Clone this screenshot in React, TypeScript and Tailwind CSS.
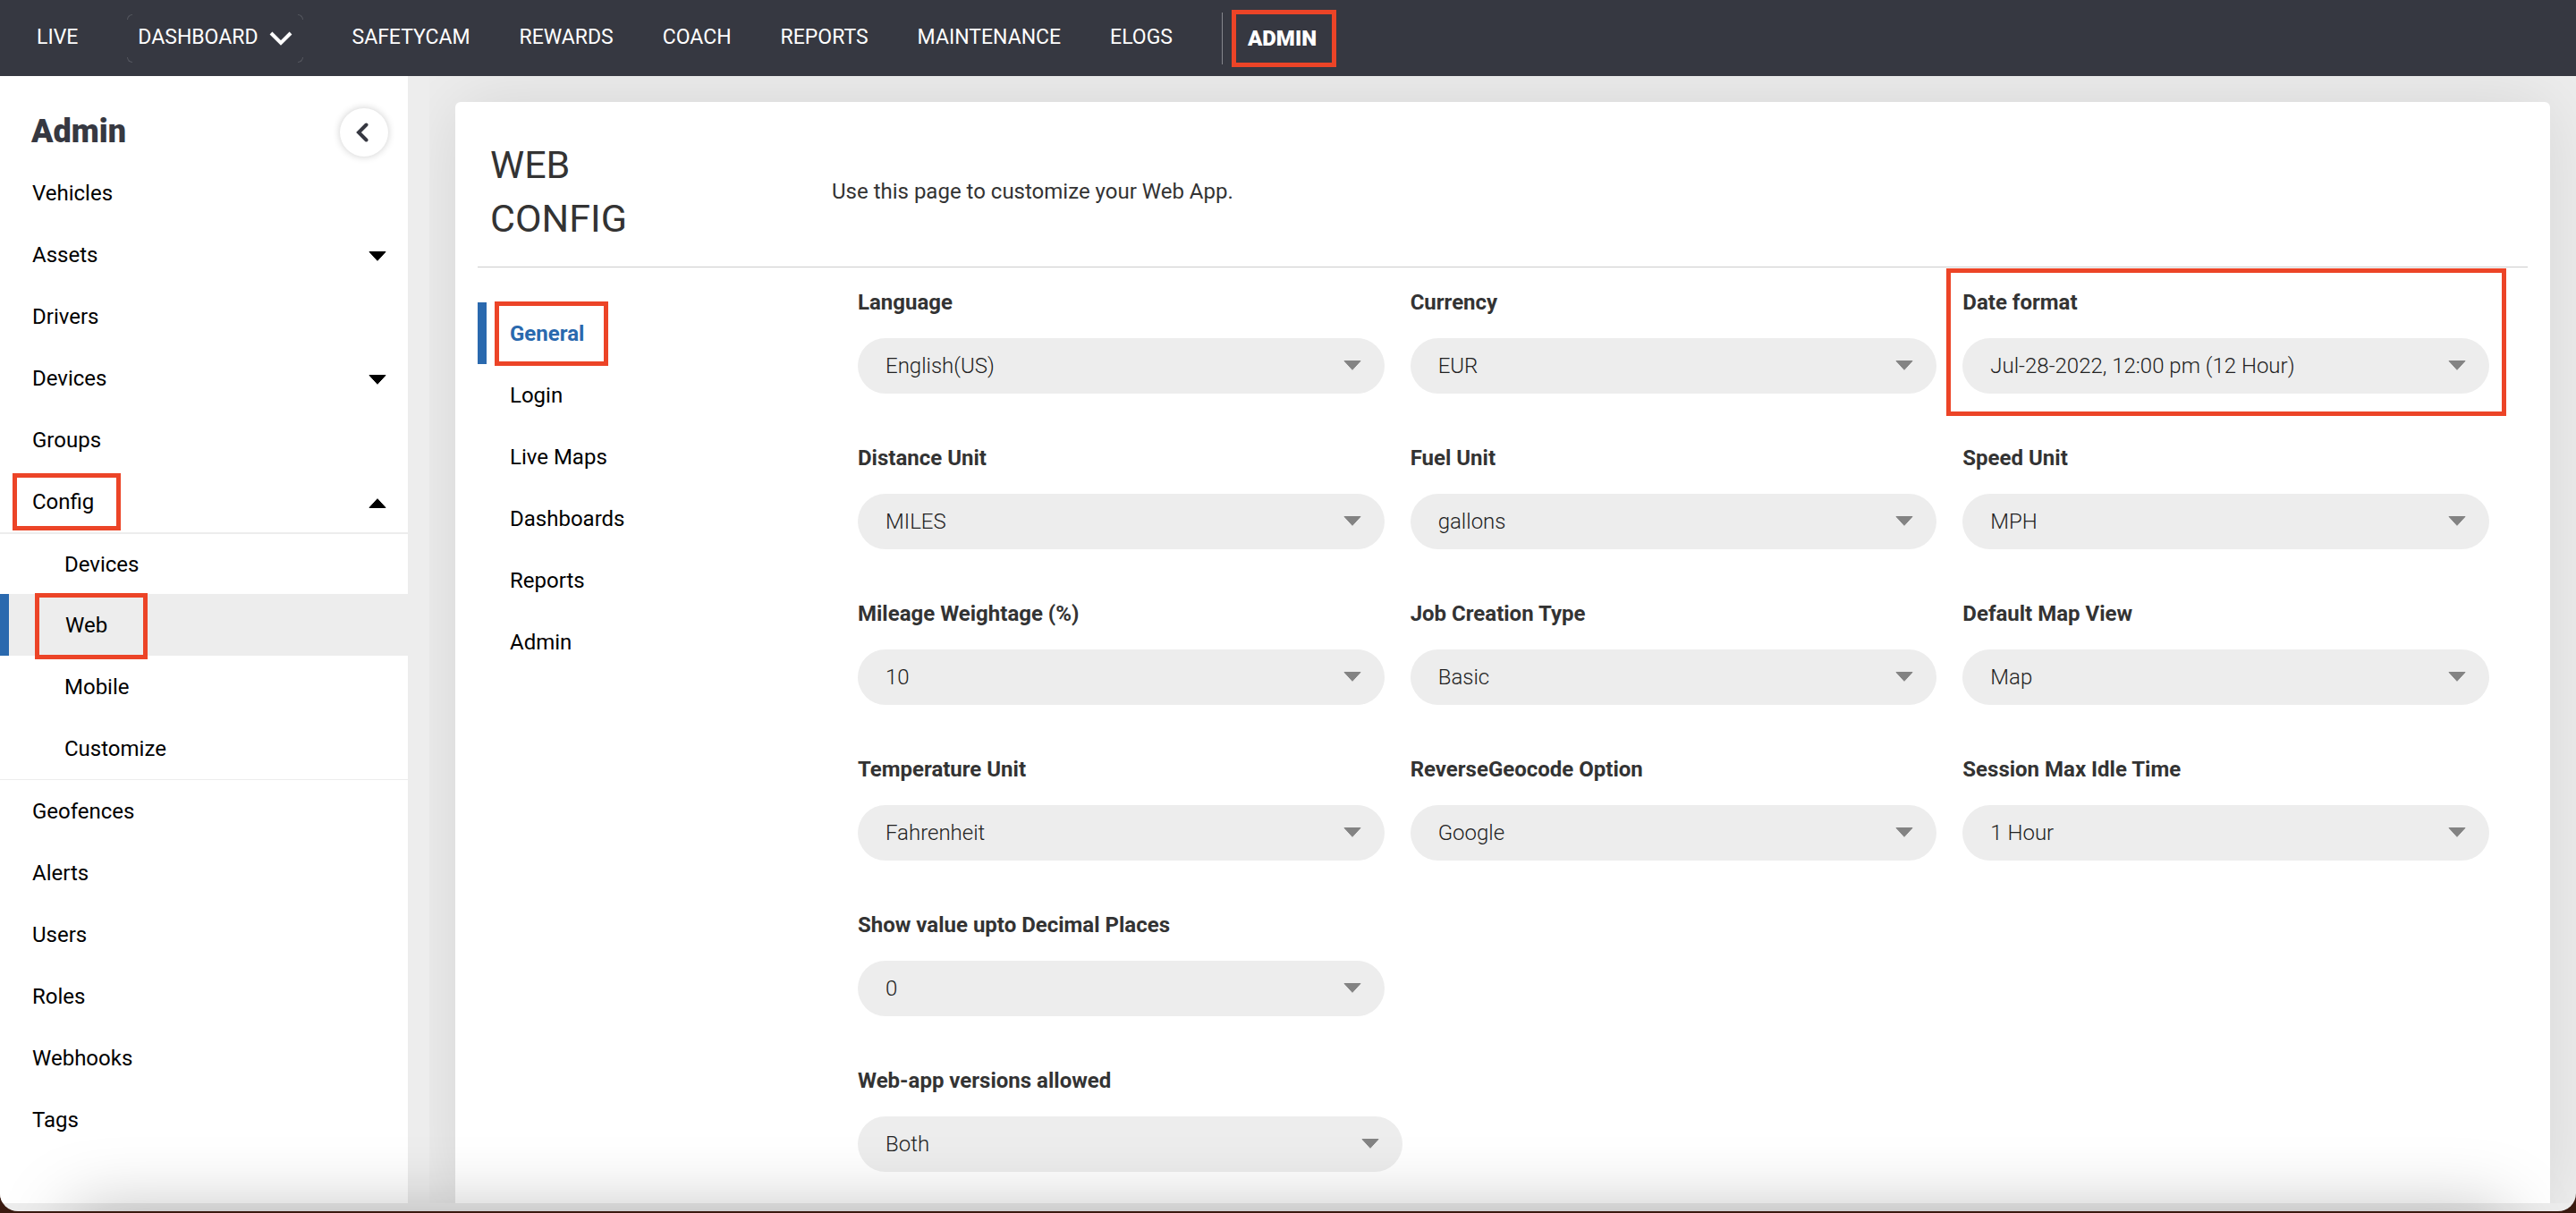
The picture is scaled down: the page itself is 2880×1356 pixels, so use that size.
import * as React from "react";
import clsx from "clsx";

interface Field {
  id: string;
  label: string;
  value: string;
  highlighted?: boolean;
  wide?: boolean;
}

interface MenuItem {
  label: string;
  caret?: "up" | "down";
  highlighted?: boolean;
}

const navItems = ["SAFETYCAM", "REWARDS", "COACH", "REPORTS", "MAINTENANCE", "ELOGS"];

const menuTop: MenuItem[] = [
  { label: "Vehicles" },
  { label: "Assets", caret: "down" },
  { label: "Drivers" },
  { label: "Devices", caret: "down" },
  { label: "Groups" },
  { label: "Config", caret: "up", highlighted: true },
];

const menuConfig = ["Devices", "Web", "Mobile", "Customize"];

const menuBottom: MenuItem[] = [
  { label: "Geofences" },
  { label: "Alerts" },
  { label: "Users" },
  { label: "Roles" },
  { label: "Webhooks" },
  { label: "Tags" },
];

const tabs = ["General", "Login", "Live Maps", "Dashboards", "Reports", "Admin"];

const fieldRows: Field[][] = [
  [
    { id: "language", label: "Language", value: "English(US)" },
    { id: "currency", label: "Currency", value: "EUR" },
    { id: "date-format", label: "Date format", value: "Jul-28-2022, 12:00 pm (12 Hour)", highlighted: true },
  ],
  [
    { id: "distance", label: "Distance Unit", value: "MILES" },
    { id: "fuel", label: "Fuel Unit", value: "gallons" },
    { id: "speed", label: "Speed Unit", value: "MPH" },
  ],
  [
    { id: "mileage", label: "Mileage Weightage (%)", value: "10" },
    { id: "job", label: "Job Creation Type", value: "Basic" },
    { id: "map-view", label: "Default Map View", value: "Map" },
  ],
  [
    { id: "temperature", label: "Temperature Unit", value: "Fahrenheit" },
    { id: "geocode", label: "ReverseGeocode Option", value: "Google" },
    { id: "idle", label: "Session Max Idle Time", value: "1 Hour" },
  ],
  [{ id: "decimals", label: "Show value upto Decimal Places", value: "0" }],
  [{ id: "versions", label: "Web-app versions allowed", value: "Both", wide: true }],
];

function Highlight({ className }: { className: string }) {
  return (
    <span
      className={clsx("pointer-events-none absolute z-10 border-[5px] border-[#ec4427]", className)}
    />
  );
}

function Triangle({ className }: { className?: string }) {
  return (
    <svg viewBox="0 0 20 11" className={clsx("h-[11px] w-5", className)} aria-hidden="true">
      <path
        d="M1 .5h18L10 10.300z"
        fill="currentColor"
        stroke="currentColor"
        strokeWidth="1"
        strokeLinejoin="round"
      />
    </svg>
  );
}

function TopNav() {
  return (
    <nav className="flex h-[85px] shrink-0 items-center gap-[55px] bg-[#363841] pl-[41px] text-[23px] text-white">
      <a href="#live">LIVE</a>
      <button type="button" className="relative -mr-px flex h-[54px] items-center gap-[13px] px-3">
        <span className="absolute top-0 left-0 size-1.5 rounded-tl-md border-t border-l border-[#55575f]" />
        <span className="absolute top-0 right-0 size-1.5 rounded-tr-md border-t border-r border-[#55575f]" />
        <span className="absolute bottom-0 left-0 size-1.5 rounded-bl-md border-b border-l border-[#55575f]" />
        <span className="absolute right-0 bottom-0 size-1.5 rounded-br-md border-r border-b border-[#55575f]" />
        DASHBOARD
        <svg viewBox="0 0 26 16" className="h-4 w-[26px]" fill="none" stroke="currentColor" strokeWidth="4" aria-hidden="true">
          <path d="M2 2l11 11L24 2" />
        </svg>
      </button>
      {navItems.map((item) => (
        <a key={item} href={"#" + item.toLowerCase()}>
          {item}
        </a>
      ))}
      <span className="flex items-center gap-7">
        <span className="h-[58px] w-px bg-[#85868c]" />
        <a href="#admin" className="relative text-2xl font-black">
          ADMIN
          <Highlight className="-top-4 -right-[22px] -bottom-4 -left-[18px]" />
        </a>
      </span>
    </nav>
  );
}

function MenuRow({ item }: { item: MenuItem }) {
  return (
    <li>
      <a href={"#" + item.label.toLowerCase()} className="flex h-[69px] items-center justify-between pr-6 pl-9">
        <span className="relative">
          {item.label}
          {item.highlighted && <Highlight className="-top-4 -right-[30px] -bottom-4 -left-[22px]" />}
        </span>
        {item.caret && <Triangle className={clsx("mt-1", item.caret === "up" && "rotate-180")} />}
      </a>
    </li>
  );
}

function Sidebar() {
  return (
    <aside className="w-[456px] shrink-0 bg-white text-2xl text-black">
      <div className="flex h-24 items-end justify-between pr-[22px] pl-[35px]">
        <h2 className="pb-3 text-4xl leading-[44px] font-black text-[#363841]">Admin</h2>
        <button
          type="button"
          aria-label="Collapse menu"
          className="mb-1.5 flex size-[54px] items-center justify-center rounded-full bg-white pr-1 text-[#363841] shadow-[0_0_8px_rgba(0,0,0,0.2)]"
        >
          <svg viewBox="0 0 14 22" className="h-[22px] w-3.5" fill="none" stroke="currentColor" strokeWidth="4" strokeLinecap="round" aria-hidden="true">
            <path d="M11.500 2.500L3 11l8.500 8.500" />
          </svg>
        </button>
      </div>
      <ul>
        {menuTop.map((item) => (
          <MenuRow key={item.label} item={item} />
        ))}
      </ul>
      <ul className="border-b border-[#ededed]">
        {menuConfig.map((label) => (
          <li key={label} className="h-[69px] first:border-t-2 first:border-[#ededed]">
            <a
              href={"#config-" + label.toLowerCase()}
              className={clsx(
                "flex h-full items-center",
                label === "Web" ? "border-l-[10px] border-[#2a69ae] bg-[#ededed] pl-[63px]" : "pl-[72px]"
              )}
            >
              <span className="relative">
                {label}
                {label === "Web" && <Highlight className="-top-5 -right-[45px] -bottom-[22px] -left-[34px]" />}
              </span>
            </a>
          </li>
        ))}
      </ul>
      <ul>
        {menuBottom.map((item) => (
          <MenuRow key={item.label} item={item} />
        ))}
      </ul>
    </aside>
  );
}

function SelectField({ field }: { field: Field }) {
  return (
    <div className="relative">
      <label htmlFor={field.id} className="block text-2xl leading-8 font-bold text-[#333333]">
        {field.label}
      </label>
      <div className={clsx("relative mt-6", field.wide && "-mr-5")}>
        <select
          id={field.id}
          className="h-[62px] w-full appearance-none rounded-full bg-[#ededed] pr-16 pl-[31px] text-2xl font-light text-[#222222]"
        >
          <option>{field.value}</option>
        </select>
        <Triangle className="pointer-events-none absolute top-[25px] right-[26px] text-[#838383]" />
      </div>
      {field.highlighted && <Highlight className="-top-[22px] -right-[19px] -bottom-[25px] -left-[18px]" />}
    </div>
  );
}

function ConfigCard() {
  return (
    <section className="flex-1 rounded-t-md bg-white px-[25px] shadow-[0_0_80px_rgba(0,0,0,0.1)]">
      <header className="flex h-[185px] items-center border-b border-[#cccccc] pt-4 pl-3.5">
        <h1 className="w-[382px] text-[43px] leading-[60px] text-[#333333]">
          WEB
          <br />
          CONFIG
        </h1>
        <p className="text-2xl text-[#333333]">Use this page to customize your Web App.</p>
      </header>
      <div className="flex">
        <ul className="w-[425px] shrink-0 pt-[39px] text-2xl text-black">
          {tabs.map((tab) => (
            <li key={tab}>
              <a
                href={"#tab-" + tab.toLowerCase()}
                className={clsx(
                  "flex h-[69px] items-center",
                  tab === "General" ? "border-l-[10px] border-[#2a69ae] pl-[26px] font-bold text-[#2a69ae]" : "pl-9"
                )}
              >
                <span className="relative">
                  {tab}
                  {tab === "General" && <Highlight className="-top-5 -right-[27px] -bottom-5 -left-[17px]" />}
                </span>
              </a>
            </li>
          ))}
        </ul>
        <form className="flex flex-1 flex-col gap-14 pt-[23px] pr-[43px]">
          {fieldRows.map((row) => (
            <div key={row[0].id} className="grid grid-cols-3 gap-[29px]">
              {row.map((field) => (
                <SelectField key={field.id} field={field} />
              ))}
            </div>
          ))}
        </form>
      </div>
    </section>
  );
}

export default function App() {
  return (
    <div className="flex min-h-screen flex-col bg-[#3a1a10] pb-0.5 font-[Roboto,sans-serif]">
      <div className="relative flex flex-1 flex-col overflow-hidden rounded-b-[20px] bg-[#ededed]">
        <TopNav />
        <div className="mb-[9px] flex flex-1">
          <Sidebar />
          <main className="ml-6 flex flex-1 overflow-hidden px-[29px] pt-[29px]">
            <ConfigCard />
          </main>
        </div>
        {/* Soft shade along the bottom edge of the window */}
        <div className="pointer-events-none absolute inset-x-20 -bottom-40 h-40 shadow-[0_0_80px_rgba(0,0,0,0.26)]" />
      </div>
    </div>
  );
}
